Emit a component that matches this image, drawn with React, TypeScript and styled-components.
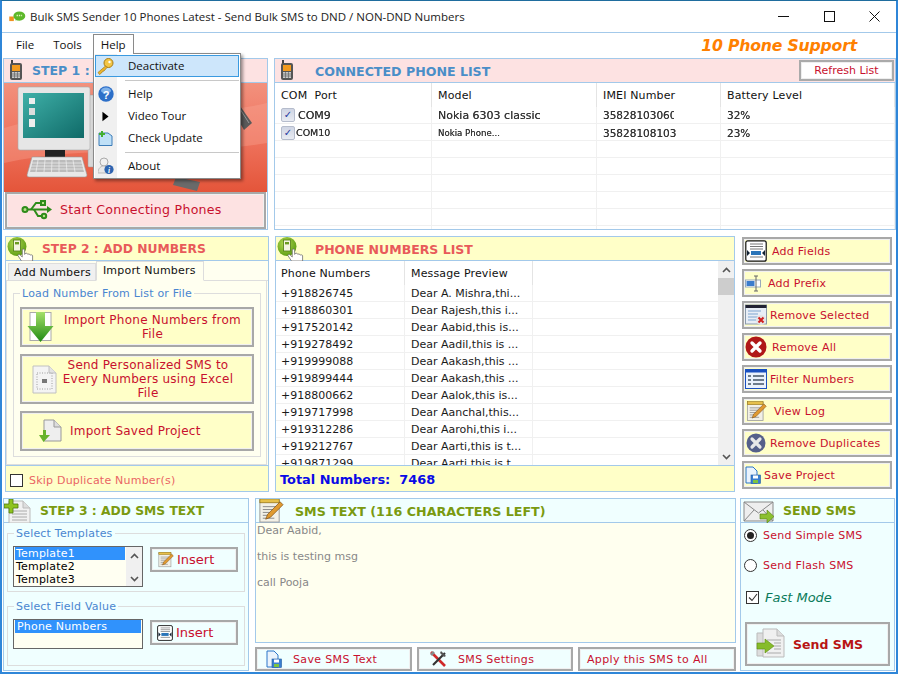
import React from "react";
import styled, { createGlobalStyle } from "styled-components";

const Global = createGlobalStyle`
  html, body { margin: 0; padding: 0; background: #fff; }
  * { box-sizing: border-box; }
  #root { width: 898px; height: 674px; overflow: hidden; }
`;

const VERDANA = `"DejaVu Sans", Verdana, sans-serif`;
const SEGOE = `"Open Sans", "Noto Sans", sans-serif`;
const LINE = "#a3c9ea";
const RED = "#c8102e";

const Win = styled.div`
  position: relative;
  width: 898px;
  height: 674px;
  overflow: hidden;
  background: #fff;
  border-style: solid;
  border-color: #2f86d8;
  border-width: 1px 2px 2px 2px;
  border-top-color: #1f6d9e;
  font-family: ${VERDANA};
  font-size: 11px;
`;
const TitleBar = styled.div`
  height: 32px;
  display: flex;
  align-items: center;
  padding-left: 7px;
  border-bottom: 1px solid ${LINE};
`;
const TitleText = styled.span`
  font-family: ${SEGOE};
  font-size: 11.5px;
  color: #222;
  margin-left: 4px;
  flex: 1;
  white-space: nowrap;
`;
const WinBtns = styled.div`
  display: flex;
  align-items: center;
  gap: 34.5px;
  padding-right: 16px;
`;
const MenuBar = styled.div`
  height: 25px;
  display: flex;
  align-items: flex-start;
  padding: 1px 0 0 6px;
  position: relative;
`;
const MenuItem = styled.div<{ $open?: boolean }>`
  height: 20px;
  padding: 0 7px;
  display: flex;
  align-items: center;
  font-family: ${SEGOE};
  font-size: 11.5px;
  color: #111;
  margin-right: 3px;
  border: 1px solid ${(p) => (p.$open ? "#8a8a8a" : "transparent")};
  border-bottom: none;
  background: #fff;
  z-index: 3;
  position: relative;
`;
const Support = styled.div`
  margin-left: auto;
  margin-right: 39px;
  align-self: center;
  margin-top: -2px;
  font: italic bold 15.7px ${VERDANA};
  color: #ff8000;
  letter-spacing: -0.2px;
`;
const Row = styled.div<{ $gap: number; $left: number; $top: number; $h: number }>`
  display: flex;
  gap: ${(p) => p.$gap}px;
  margin: ${(p) => p.$top}px 0 0 ${(p) => p.$left}px;
  height: ${(p) => p.$h}px;
`;
const Panel = styled.div<{ $w: number; $bg?: string; $nudge?: number; $grow?: boolean }>`
  width: ${(p) => p.$w}px;
  flex: ${(p) => (p.$grow ? 1 : "none")};
  min-height: 0;
  margin-left: ${(p) => p.$nudge ?? 0}px;
  display: flex;
  flex-direction: column;
  border: 1px solid ${LINE};
  background: ${(p) => p.$bg || "#fff"};
  overflow: hidden;
`;
const Head = styled.div<{ $bg: string; $pad?: number; $gap?: number }>`
  height: 24px;
  flex: none;
  display: flex;
  align-items: center;
  background: ${(p) => p.$bg};
  border-bottom: 1px solid ${LINE};
  padding-left: ${(p) => p.$pad ?? 2}px;
  gap: ${(p) => p.$gap ?? 6}px;
`;
const HeadText = styled.span<{ $c: string; $s?: number; $dy?: number }>`
  font-weight: bold;
  font-size: ${(p) => p.$s ?? 12.5}px;
  color: ${(p) => p.$c};
  white-space: nowrap;
  padding-top: ${(p) => p.$dy ?? 0}px;
`;
const Refresh = styled.div`
  margin-left: auto;
  margin-right: 1px;
  width: 95px;
  height: 21px;
  border: 2px solid #aaa;
  box-shadow: inset 0 0 0 1px #eee;
  background: #fff;
  color: ${RED};
  display: flex;
  align-items: center;
  justify-content: center;
  font-size: 11px;
`;
const Illustration = styled.div`
  height: 109px;
  flex: none;
  overflow: hidden;
`;
const BigBtn = styled.div<{ $bg?: string; $h?: number; $w?: number; $pad?: number; $gap?: number; $size?: number }>`
  height: ${(p) => p.$h ?? 28}px;
  width: ${(p) => (p.$w ? `${p.$w}px` : "auto")};
  flex: none;
  display: flex;
  align-items: center;
  gap: ${(p) => p.$gap ?? 4}px;
  padding-left: ${(p) => p.$pad ?? 2}px;
  background: ${(p) => p.$bg || "#ffffc8"};
  border: 2px solid #a8a8a8;
  box-shadow: inset 0 0 0 1px #f0f0f0;
  color: ${RED};
  font-size: ${(p) => p.$size ?? 11}px;
  letter-spacing: 0.25px;
  white-space: nowrap;
`;
const ConnectBtn = styled(BigBtn)`
  margin: 0 1px;
  padding-bottom: 2px;
  background: #fde2e2;
  font-size: 12.6px;
`;
const Table = styled.div`
  flex: 1;
  position: relative;
  overflow: hidden;
  display: flex;
  min-height: 0;
`;
const TableBody = styled.div`
  flex: 1;
  min-width: 0;
  overflow: hidden;
`;
const HeadRow = styled.div<{ $cols: string }>`
  display: grid;
  grid-template-columns: ${(p) => p.$cols};
  height: 24px;
`;
const HeadCell = styled.div<{ $pad?: number }>`
  display: flex;
  align-items: center;
  padding: 1px 5px 0 ${(p) => p.$pad ?? 6}px;
  font-size: 11px;
  letter-spacing: 0.15px;
  color: #111;
  border-right: 1px solid #e4e4e4;
  white-space: pre;
`;
const DataRow = styled.div<{ $cols: string }>`
  display: grid;
  grid-template-columns: ${(p) => p.$cols};
  height: 17px;
  border-bottom: 1px solid #f0f0f0;
  flex: none;
`;
const Cell = styled.div<{ $pad?: number; $pt?: number }>`
  display: flex;
  align-items: center;
  gap: 3px;
  padding-left: ${(p) => p.$pad ?? 6}px;
  padding-top: ${(p) => p.$pt ?? 0}px;
  border-right: 1px solid #f0f0f0;
  font-size: 11px;
  color: #1a1a1a;
  white-space: nowrap;
  overflow: hidden;
`;
const Blurred = styled.span<{ $s?: number; $clip?: number; $shift?: number }>`
  display: inline-block;
  filter: blur(0.6px);
  color: #333;
  text-shadow: 0 0 0.6px #444;
  font-size: ${(p) => p.$s ?? 11}px;
  margin-left: ${(p) => p.$shift ?? 0}px;
  width: ${(p) => (p.$clip ? `${p.$clip}px` : "auto")};
  overflow: hidden;
`;
const Check = styled.span`
  width: 14px;
  height: 14px;
  flex: none;
  border-radius: 2px;
  background: linear-gradient(#cfd5e4, #e8ebf2);
  border: 1px solid #b5bccc;
  color: #2438a0;
  font-size: 10px;
  line-height: 12px;
  text-align: center;
  font-weight: bold;
`;
const Tabs = styled.div`
  display: flex;
  height: 20px;
  padding-left: 2px;
  background: #fffff0;
  flex: none;
  align-items: flex-end;
  border-bottom: 1px solid #ddd;
`;
const Tab = styled.div<{ $on?: boolean }>`
  height: ${(p) => (p.$on ? 20 : 17)}px;
  padding: 0 ${(p) => (p.$on ? 7 : 4)}px ${(p) => (p.$on ? 2 : 0)}px ${(p) => (p.$on ? 6 : 5)}px;
  display: flex;
  align-items: center;
  font-size: 11px;
  letter-spacing: 0.2px;
  color: #111;
  background: ${(p) => (p.$on ? "#fffff0" : "#f0f0f0")};
  border: 1px solid #ddd;
  border-bottom: ${(p) => (p.$on ? "1px solid #fffff0" : "none")};
  margin-bottom: ${(p) => (p.$on ? -1 : 0)}px;
  position: relative;
`;
const TabBody = styled.div`
  flex: 1;
  margin-right: 1px;
  padding: 6px 5px 7px 6px;
  border: 1px solid #ddd;
  border-top: none;
  background: #fffff0;
  display: flex;
  min-height: 0;
`;
const Field = styled.fieldset<{ $gap?: number; $h?: number; $px?: number; $pt?: number }>`
  margin: 0;
  padding: ${(p) => p.$pt ?? 6}px ${(p) => p.$px ?? 6}px 0;
  border: 1px solid #ddd;
  flex: ${(p) => (p.$h ? "none" : 1)};
  height: ${(p) => (p.$h ? `${p.$h}px` : "auto")};
  min-width: 0;
  display: flex;
  flex-direction: column;
  gap: ${(p) => p.$gap ?? 8}px;
`;
const Legend = styled.legend<{ $ml?: number }>`
  color: #4a86d0;
  font-size: 11px;
  letter-spacing: 0.2px;
  padding: 0 2px;
  margin-left: ${(p) => p.$ml ?? 0}px;
  line-height: 13px;
`;
const ImportBtn = styled(BigBtn)<{ $rp?: number }>`
  white-space: normal;
  font-size: 12px;
  line-height: 14px;
  text-align: center;
  padding-right: ${(p) => p.$rp ?? 0}px;
`;
const BtnLabel = styled.span<{ $left?: boolean }>`
  flex: ${(p) => (p.$left ? "none" : 1)};
`;
const Footer = styled.div`
  height: 26px;
  flex: none;
  display: flex;
  align-items: center;
  background: #ffffc8;
  border-top: 1px solid ${LINE};
  padding: 3px 0 0 4px;
  gap: 6px;
  font-size: 11px;
`;
const Box = styled.span`
  width: 13px;
  height: 13px;
  flex: none;
  border: 1px solid #333;
  background: #fff;
  display: inline-flex;
  align-items: center;
  justify-content: center;
`;
const Skip = styled.span`
  color: #ea6464;
  letter-spacing: 0.22px;
  padding-top: 1px;
`;
const Total = styled.span`
  color: #0a0ae6;
  font-weight: bold;
  font-size: 12.9px;
  white-space: pre;
  margin-top: -2px;
`;
const Scroll = styled.div`
  width: 16px;
  flex: none;
  background: #f0f0f0;
  display: flex;
  flex-direction: column;
  align-items: center;
`;
const ScrollArrow = styled.div`
  height: 17px;
  flex: none;
  display: flex;
  align-items: center;
  justify-content: center;
  width: 100%;
`;
const Thumb = styled.div`
  width: 100%;
  height: 17px;
  background: #cdcdcd;
  flex: none;
`;
const ScrollGap = styled.div`
  flex: 1;
`;
const SideCol = styled.div`
  width: 150px;
  flex: none;
  margin-left: 1px;
  display: flex;
  flex-direction: column;
  gap: 4px;
  padding-top: 1px;
`;
const Fields = styled.div`
  flex: 1;
  padding: 4px 3px 3px 3px;
  display: flex;
  flex-direction: column;
  gap: 8px;
  min-height: 0;
`;
const SelectRow = styled.div`
  display: flex;
  gap: 7px;
  align-items: flex-start;
`;
const ListBox = styled.div<{ $h: number }>`
  width: 130px;
  height: ${(p) => p.$h}px;
  border: 1px solid #666;
  background: #fffff2;
  display: flex;
  flex: none;
  overflow: hidden;
`;
const ListItems = styled.div`
  flex: 1;
  padding: 0 1px;
  font-size: 11px;
  letter-spacing: 0.2px;
  line-height: 13px;
  color: #000;
`;
const ListItem = styled.div<{ $on?: boolean; $pad?: number }>`
  background: ${(p) => (p.$on ? "#3092fc" : "transparent")};
  color: ${(p) => (p.$on ? "#fff" : "#000")};
  padding-left: ${(p) => p.$pad ?? 1}px;
`;
const Mini = styled.div`
  width: 16px;
  background: #f0f0f0;
  display: flex;
  flex-direction: column;
  justify-content: space-between;
  align-items: center;
  padding: 6px 0 4px;
`;
const InsertBtn = styled(BigBtn)`
  margin-top: 1px;
  width: 88px;
  height: 25px;
  background: #f0ffff;
  font-size: 13px;
  letter-spacing: 0;
  padding-left: 5px;
  gap: 3px;
`;
const Mid = styled.div`
  width: 481px;
  flex: none;
  display: flex;
  flex-direction: column;
  gap: 4px;
`;
const SmsArea = styled.div`
  flex: 1;
  background: #ffffef;
  padding: 1px 1px 0;
  color: #888;
  font-size: 11px;
  line-height: 13px;
`;
const BtnRow = styled.div`
  display: flex;
  gap: 5px;
  height: 24px;
  flex: none;
`;
const BottomBtn = styled(BigBtn)<{ $grow: number }>`
  width: ${(p) => p.$grow}px;
  height: 24px;
  background: #f0ffff;
  letter-spacing: 0.35px;
`;
const SendBody = styled.div`
  flex: 1;
  display: flex;
  flex-direction: column;
  padding: 3px;
`;
const Radio = styled.div<{ $mb: number }>`
  display: flex;
  align-items: center;
  gap: 6px;
  height: 18px;
  margin-bottom: ${(p) => p.$mb}px;
  color: ${RED};
  font-size: 11px;
  letter-spacing: 0.25px;
`;
const RadioDot = styled.span<{ $on?: boolean }>`
  width: 13px;
  height: 13px;
  border-radius: 50%;
  border: 1px solid #333;
  background: #fff;
  display: inline-flex;
  align-items: center;
  justify-content: center;
  flex: none;
  &::after {
    content: "";
    display: ${(p) => (p.$on ? "block" : "none")};
    width: 7px;
    height: 7px;
    border-radius: 50%;
    background: #222;
  }
`;
const Fast = styled.div`
  display: flex;
  align-items: center;
  gap: 6px;
  height: 18px;
  padding-left: 2px;
  color: #0a7a5a;
  font-style: italic;
  font-size: 13px;
  margin-bottom: 16px;
`;
const SendBtn = styled(BigBtn)`
  height: 44px;
  width: 145px;
  font-weight: bold;
  font-size: 12.5px;
  letter-spacing: 0;
  background: #f0ffff;
  gap: 8px;
  padding-left: 8px;
  margin-left: 1px;
  color: #b81414;
`;
const Dropdown = styled.div`
  position: absolute;
  left: 91px;
  top: 52px;
  width: 148px;
  height: 126px;
  background: #fff;
  border: 1px solid #8a8a8a;
  box-shadow: 2px 2px 3px rgba(0, 0, 0, 0.4);
  z-index: 2;
  padding: 1px;
  font-family: ${SEGOE};
  font-size: 11.5px;
  color: #111;
  background-image: linear-gradient(90deg, transparent 1px, #f0f0f0 1px, #f0f0f0 23px, transparent 23px);
`;
const DropItem = styled.div<{ $hi?: boolean }>`
  height: 22px;
  display: flex;
  align-items: center;
  padding-bottom: 2px;
  border: 1px solid ${(p) => (p.$hi ? "#3a9ae0" : "transparent")};
  background: ${(p) => (p.$hi ? "#cde6fb" : "transparent")};
`;
const DropIcon = styled.span`
  width: 32px;
  flex: none;
  display: flex;
  justify-content: center;
  padding: 2px 13px 0 0;
`;
const DropSep = styled.div`
  height: 1px;
  background: #c8c8c8;
  margin: 3px 0 2px 30px;
`;

/* ------------ icons ------------- */
const PhoneIcon = () => (
  <svg width="14" height="21" viewBox="0 0 14 21">
    <rect x="2" y="0" width="2" height="4" fill="#444" />
    <rect x="1" y="3" width="12" height="17" rx="2" fill="#555" />
    <rect x="3" y="5" width="8" height="6" fill="#f39a1e" />
    <rect x="3" y="12" width="8" height="6" fill="#c9c9c9" />
    <path d="M3 14h8M3 16h8M5.5 12v6M8.5 12v6" stroke="#666" strokeWidth="0.7" />
  </svg>
);
const HandIcon = () => (
  <svg width="28" height="24" viewBox="0 0 28 24">
    <defs>
      <radialGradient id="hg" cx="0.4" cy="0.35" r="0.7">
        <stop offset="0" stopColor="#b4da52" />
        <stop offset="1" stopColor="#5a9a10" />
      </radialGradient>
    </defs>
    <circle cx="10" cy="9.5" r="9.5" fill="url(#hg)" />
    <rect x="6.5" y="3" width="7" height="11" fill="#f4f4e0" stroke="#4f7a12" strokeWidth="0.8" />
    <rect x="8" y="5" width="4" height="2.4" fill="#6b9a20" />
    <path transform="translate(-5 0) scale(1.5 1)" d="M13 24l-2.4-5.4c-.4-1 1-1.6 1.5-.6L13.500 20v-7c0-1.2 1.6-1.2 1.6 0v4.4l.4-.8c.6-.7 1.5-.3 1.5.4l.2.4c.4-.7 1.4-.4 1.4.4l.2.3c.5-.5 1.5-.3 1.6.6V24z" fill="#fff" stroke="#666" strokeWidth="0.6" />
  </svg>
);
const PlusDocIcon = () => (
  <svg width="28" height="24" viewBox="0 0 28 24">
    <path d="M5 2h14l7 7v15H5z" fill="#f1f1f1" stroke="#bbb" />
    <path d="M19 2v7h7" fill="#ddd" stroke="#bbb" />
    <path d="M8 12h15M8 15h15M8 18h15M8 21h15" stroke="#aaa" />
    <path d="M5 0h4v5h5v4H9v5H5V9H0V5h5z" fill="#8fc31f" stroke="#4f7a10" strokeWidth="0.8" />
  </svg>
);
const NoteIcon = ({ s = 28 }: { s?: number }) => (
  <svg width={s} height={s} viewBox="0 0 28 28">
    <rect x="3" y="3" width="20" height="23" fill="#f2f0e6" stroke="#999" />
    <rect x="3" y="2" width="20" height="4" fill="#e6c04a" stroke="#8a6a10" strokeWidth="0.7" />
    <path d="M6 10h14M6 13h12M6 16h9M6 19h8M6 22h12" stroke="#888" />
    <path d="M24 5l3 3-13 13-5 2 2-5z" fill="#e09a30" stroke="#7a4a10" strokeWidth="0.7" />
  </svg>
);
const EnvelopeIcon = () => (
  <svg width="32" height="24" viewBox="0 0 32 24">
    <path d="M1 3h29v19H1z" fill="#eee" stroke="#888" />
    <path d="M1 3l14.5 11L30 3M1 22l10-11M30 22L20 11" fill="none" stroke="#888" />
    <path d="M17 15h7v-4l7 6.5-7 6.5v-4h-7z" fill="#8cc030" stroke="#557d10" strokeWidth="0.6" />
  </svg>
);
const UsbIcon = () => (
  <svg width="32" height="21" viewBox="0 0 32 21">
    <g fill="none" stroke="#2f8c1a" strokeWidth="2">
      <path d="M6 10.5h21" />
      <path d="M10 10.5L15 4h5M13 10.5l4 6.5h4" />
      <circle cx="4" cy="10.5" r="2.5" fill="#b9e08a" />
      <rect x="20" y="2" width="4" height="4" fill="#b9e08a" />
      <circle cx="23" cy="17" r="2.2" fill="#b9e08a" />
    </g>
    <path d="M26 7l5 3.5-5 3.5z" fill="#2f8c1a" />
  </svg>
);
const DownArrowIcon = () => (
  <svg width="27" height="30" viewBox="0 0 27 30">
    <defs>
      <linearGradient id="ag" x1="0" y1="0" x2="0" y2="1">
        <stop offset="0" stopColor="#a6e06a" />
        <stop offset="1" stopColor="#1f8a12" />
      </linearGradient>
    </defs>
    <rect x="3" y="0.5" width="21" height="28" fill="#fff" stroke="#aaa" />
    <path d="M9 0h9v14h8.5L13.5 30 .5 14H9z" fill="url(#ag)" />
  </svg>
);
const ExcelIcon = () => (
  <svg width="25" height="29" viewBox="0 0 25 29">
    <path d="M1 1h16l7 7v20H1z" fill="#f4f4f4" stroke="#c0c0c0" />
    <path d="M17 1v7h7" fill="#e4e4e4" stroke="#c0c0c0" />
    <rect x="5" y="8" width="15" height="16" fill="none" stroke="#bbb" strokeDasharray="1 1.5" strokeWidth="1.5" />
    <rect x="10" y="14" width="5" height="4" fill="#777" />
  </svg>
);
const ImportDocIcon = () => (
  <svg width="23" height="24" viewBox="0 0 23 24">
    <path d="M5 1h10l7 7v14H5z" fill="#eee" stroke="#999" />
    <path d="M15 1v7h7" fill="#ddd" stroke="#999" />
    <path d="M7 11v5h4l-6.5 7L0 16h4v-5z" fill="#66b32a" />
  </svg>
);
const FieldsIcon = ({ s = 22 }: { s?: number }) => (
  <svg width={s} height={s} viewBox="0 0 22 22">
    <rect x="0.8" y="0.8" width="20.4" height="20.4" rx="2" fill="#fff" stroke="#111" strokeWidth="1.2" />
    <path d="M5 4h13M5 6.5h13M5 9h13M5 17h13" stroke="#777" />
    <rect x="6" y="11" width="10" height="4" fill="#2a74b8" />
    <path d="M2 10v6l3-3zM20 10v6l-3-3z" fill="#123" />
  </svg>
);
const PrefixIcon = () => (
  <svg width="17" height="17" viewBox="0 0 17 17">
    <rect x="0.5" y="5" width="15" height="7" fill="#fff" stroke="#9ab" />
    <rect x="1.5" y="6" width="8" height="5" fill="#3c7ccc" />
    <path d="M11 1v15M9 1h4M9 16h4" stroke="#666" />
  </svg>
);
const WindowXIcon = () => (
  <svg width="22" height="22" viewBox="0 0 22 22">
    <rect x="0.5" y="1" width="21" height="19" fill="#e8eef6" stroke="#8a9aaa" />
    <rect x="0.5" y="1" width="21" height="3" fill="#223" />
    <path d="M3 7h13M3 10h10M3 13h10M3 16h8" stroke="#7fa5d0" />
    <circle cx="16" cy="16" r="5" fill="#e4e4e4" />
    <path d="M13.5 13.5l5 5M18.5 13.5l-5 5" stroke="#d02020" strokeWidth="2" />
  </svg>
);
const RedXIcon = () => (
  <svg width="22" height="22" viewBox="0 0 22 22">
    <circle cx="11" cy="11" r="10.5" fill="#b01818" />
    <path d="M7 7l8 8M15 7l-8 8" stroke="#fff" strokeWidth="3.4" strokeLinecap="round" />
  </svg>
);
const ListIcon = () => (
  <svg width="22" height="20" viewBox="0 0 22 20">
    <rect x="0.5" y="0.5" width="21" height="19" fill="#eaf2fc" stroke="#1a50c0" />
    <rect x="0.5" y="0.5" width="21" height="3" fill="#1a50c0" />
    <path d="M3 7h3M3 11h3M3 15h3M8 7h11M8 11h11M8 15h11" stroke="#456" strokeWidth="1.4" />
  </svg>
);
const GreyXIcon = () => (
  <svg width="20" height="20" viewBox="0 0 20 20">
    <circle cx="10" cy="10" r="9.5" fill="#55608a" />
    <path d="M6 6l8 8M14 6l-8 8" stroke="#e8e8e8" strokeWidth="3.2" strokeLinecap="round" />
  </svg>
);
const SaveIcon = ({ s = 16 }: { s?: number }) => (
  <svg width={s} height={s + 2} viewBox="0 0 16 18">
    <path d="M1 1h7l4 4v12H1z" fill="#eaf3fc" stroke="#2a74c8" />
    <rect x="6" y="9" width="9.5" height="8.5" fill="#3a7ed0" stroke="#1f5aa0" strokeWidth="0.6" />
    <rect x="8" y="9.5" width="5" height="3" fill="#fff" />
    <rect x="8" y="14" width="5" height="3" fill="#7ec440" />
  </svg>
);
const ToolsIcon = () => (
  <svg width="18" height="18" viewBox="0 0 18 18">
    <path d="M2 2l14 14" stroke="#d02828" strokeWidth="2.6" />
    <path d="M16 3L4 15" stroke="#333" strokeWidth="2.2" />
    <path d="M12 1l5 5-2 1-4-4z" fill="#555" />
    <path d="M1 4l3-3 2 2-3 3z" fill="#888" />
  </svg>
);
const SendDocIcon = () => (
  <svg width="30" height="32" viewBox="0 0 30 32">
    <path d="M2 5h14l5 5v18H2z" fill="#ddd" stroke="#bbb" />
    <path d="M8 1h14l7 7v21H8z" fill="#f0f0f0" stroke="#bbb" />
    <path d="M22 1v7h7" fill="#ddd" stroke="#bbb" />
    <path d="M12 12h14M19 15h7M19 18h7M19 21h7M12 25h14" stroke="#aaa" />
    <path d="M2 15h8v-4l9 7-9 7v-4H2z" fill="#86bc2a" stroke="#5c8a10" strokeWidth="0.6" />
  </svg>
);
const KeyIcon = () => (
  <svg width="17" height="17" viewBox="0 0 17 17">
    <circle cx="11.5" cy="5" r="4.5" fill="#f3c646" stroke="#a87a14" />
    <circle cx="12.5" cy="4" r="1.2" fill="#fff" />
    <path d="M8.5 8L1 14.5l1.5 2 2-1.5 1-1.5 1.5-.5 3-3.5z" fill="#eab52e" stroke="#a87a14" strokeWidth="0.7" />
  </svg>
);
const HelpIcon = () => (
  <svg width="16" height="16" viewBox="0 0 16 16">
    <circle cx="8" cy="8" r="7.7" fill="#2c6fc8" />
    <ellipse cx="8" cy="4.5" rx="5" ry="3" fill="#7fb2ea" />
    <text x="8" y="12.5" textAnchor="middle" fontSize="11" fontWeight="bold" fill="#fff" fontFamily="Liberation Sans, sans-serif">?</text>
  </svg>
);
const PlayIcon = () => (
  <svg width="7" height="11" viewBox="0 0 8 11">
    <path d="M0.5 0l7 5.5-7 5.500z" fill="#000" />
  </svg>
);
const UpdateIcon = () => (
  <svg width="15" height="15" viewBox="0 0 15 15">
    <path d="M1 2h9l4 3v9.5H1z" fill="#bfe0f7" stroke="#3c7cb8" />
    <path d="M3 0v2H1v2h2v2h2V4h2V2H5V0z" fill="#44b030" />
  </svg>
);
const AboutIcon = () => (
  <svg width="16" height="18" viewBox="0 0 16 18">
    <circle cx="6" cy="5" r="4" fill="#f0f0f0" stroke="#aaa" />
    <path d="M0 16c0-5 3-7 6-7s6 2 6 7z" fill="#e8e8e8" stroke="#bbb" />
    <circle cx="11" cy="12.5" r="4.6" fill="#2d64b0" />
    <text x="11" y="15.5" textAnchor="middle" fontSize="7.5" fontStyle="italic" fontWeight="bold" fill="#fff" fontFamily="Liberation Serif, serif">i</text>
  </svg>
);
const AppIcon = () => (
  <svg width="17" height="11" viewBox="0 0 18 12">
    <rect x="0" y="6" width="5" height="5" fill="#f09020" />
    <ellipse cx="11" cy="5.5" rx="6.5" ry="5" fill="#5cb82a" />
    <path d="M6 10l3-2 1 2z" fill="#5cb82a" />
    <path d="M8 5h6" stroke="#e4f4c0" strokeWidth="1.6" strokeDasharray="1.5 1" />
  </svg>
);
const Caret = ({ up }: { up?: boolean }) => (
  <svg width="9" height="6" viewBox="0 0 9 6">
    <path d={up ? "M1 5l3.5-3.5L8 5" : "M1 1l3.5 3.5L8 1"} fill="none" stroke="#555" strokeWidth="1.6" />
  </svg>
);
const Scene = () => (
  <svg width="263" height="109" viewBox="0 0 263 109">
    <defs>
      <linearGradient id="bg" x1="0" y1="0" x2="0" y2="1">
        <stop offset="0" stopColor="#f2917d" />
        <stop offset="0.45" stopColor="#f07762" />
        <stop offset="1" stopColor="#e4553a" />
      </linearGradient>
      <linearGradient id="scr" x1="0" y1="0" x2="1" y2="1">
        <stop offset="0" stopColor="#3fb0a8" />
        <stop offset="1" stopColor="#0f6a68" />
      </linearGradient>
    </defs>
    <rect width="263" height="109" fill="url(#bg)" />
    <path d="M0 45C80 20 180 40 263 20V60C170 75 90 60 0 80z" fill="#f8a898" opacity="0.35" />
    <rect x="84" y="12" width="26" height="72" rx="1" fill="#d8d8d8" stroke="#999" strokeWidth="0.5" />
    <rect x="14" y="4" width="72" height="63" rx="2" fill="#e6e6e6" stroke="#aaa" strokeWidth="0.6" />
    <rect x="19" y="10" width="61" height="45" fill="url(#scr)" />
    <rect x="25" y="15" width="6" height="6" fill="#eee" />
    <rect x="25" y="25" width="6" height="7" fill="#ddd" />
    <rect x="25" y="36" width="6" height="8" fill="#eee" />
    <rect x="41" y="67" width="20" height="7" fill="#222" />
    <path d="M28 74h50l5 18a2 2 0 0 1-2 2H25a2 2 0 0 1-2-2z" fill="#e8e8e8" stroke="#999" strokeWidth="0.6" />
    <path d="M29 77h48l3 12H26z" fill="#bbb" />
    <path d="M28 80h50M27 83h52M27 86h53M34 77l-2 12M41 77l-1 12M48 77l-.5 12M55 77v12M62 77l1 12M69 77l2 12" stroke="#f2f2f2" strokeWidth="0.7" />
    <path d="M172 94l24 5-3 9-24-6z" fill="#6a6a6a" />
    <path d="M234 20l14 20-8 7-8-14z" fill="#5a5a5a" />
    <path d="M236 26l9 14" stroke="#999" />
  </svg>
);

const phoneCols = "129px 128px 1fr";
const comCols = "157px 165px 124px 1fr";
const rows: [string, string][] = [
  ["+918826745", "Dear A. Mishra,thi..."],
  ["+918860301", "Dear Rajesh,this i..."],
  ["+917520142", "Dear Aabid,this is..."],
  ["+919278492", "Dear Aadil,this is ..."],
  ["+919999088", "Dear Aakash,this ..."],
  ["+919899444", "Dear Aakash,this ..."],
  ["+918800662", "Dear Aalok,this is..."],
  ["+919717998", "Dear Aanchal,this..."],
  ["+919312286", "Dear Aarohi,this i..."],
  ["+919212767", "Dear Aarti,this is t..."],
  ["+919871299.....", "Dear Aarti,this is t"],
];
const side: { label: string; icon: React.ReactNode; gap: number; pad: number }[] = [
  { label: "Add Fields", icon: <FieldsIcon />, gap: 5, pad: 1 },
  { label: "Add Prefix", icon: <PrefixIcon />, gap: 6, pad: 1 },
  { label: "Remove Selected", icon: <WindowXIcon />, gap: 3, pad: 1 },
  { label: "Remove All", icon: <RedXIcon />, gap: 5, pad: 1 },
  { label: "Filter Numbers", icon: <ListIcon />, gap: 3, pad: 1 },
  { label: "View Log", icon: <NoteIcon s={22} />, gap: 7, pad: 1 },
  { label: "Remove Duplicates", icon: <GreyXIcon />, gap: 4, pad: 2 },
  { label: "Save Project", icon: <SaveIcon />, gap: 3, pad: 1 },
];

export default function App() {
  return (
    <>
      <Global />
      <Win>
        <TitleBar>
          <AppIcon />
          <TitleText>Bulk SMS Sender 10 Phones Latest - Send Bulk SMS to DND / NON-DND Numbers</TitleText>
          <WinBtns>
            <svg width="11" height="11" viewBox="0 0 11 11"><path d="M0 5.5h11" stroke="#111" /></svg>
            <svg width="11" height="11" viewBox="0 0 11 11"><rect x="0.5" y="0.5" width="10" height="10" fill="none" stroke="#111" /></svg>
            <svg width="11" height="11" viewBox="0 0 11 11"><path d="M0.5 0.5l10 10M10.5 0.5l-10 10" stroke="#111" /></svg>
          </WinBtns>
        </TitleBar>
        <MenuBar>
          <MenuItem>File</MenuItem>
          <MenuItem>Tools</MenuItem>
          <MenuItem $open>Help</MenuItem>
          <Support>10 Phone Support</Support>
        </MenuBar>
        <Dropdown>
          <DropItem $hi>
            <DropIcon><KeyIcon /></DropIcon>Deactivate
          </DropItem>
          <DropSep />
          <DropItem><DropIcon><HelpIcon /></DropIcon>Help</DropItem>
          <DropItem><DropIcon><PlayIcon /></DropIcon>Video Tour</DropItem>
          <DropItem><DropIcon><UpdateIcon /></DropIcon>Check Update</DropItem>
          <DropSep />
          <DropItem><DropIcon><AboutIcon /></DropIcon>About</DropItem>
        </Dropdown>

        <Row $gap={6} $left={1} $top={0} $h={172}>
          <Panel $w={265}>
            <Head $bg="#fde2e2" $pad={5} $gap={9}>
              <PhoneIcon />
              <HeadText $c="#4a8ec8">STEP 1 :</HeadText>
            </Head>
            <Illustration><Scene /></Illustration>
            <ConnectBtn $h={37} $pad={14} $gap={7}>
              <UsbIcon />
              Start Connecting Phones
            </ConnectBtn>
          </Panel>
          <Panel $w={622}>
            <Head $bg="#fde2e2" $pad={5} $gap={21}>
              <PhoneIcon />
              <HeadText $c="#4a8ec8" $s={12.6} $dy={1}>CONNECTED PHONE LIST</HeadText>
              <Refresh>Refresh List</Refresh>
            </Head>
            <Table>
              <TableBody>
                <HeadRow $cols={comCols}>
                  <HeadCell>COM  Port</HeadCell>
                  <HeadCell>Model</HeadCell>
                  <HeadCell>IMEI Number</HeadCell>
                  <HeadCell>Battery Level</HeadCell>
                </HeadRow>
                <DataRow $cols={comCols}>
                  <Cell><Check>✓</Check><Blurred>COM9</Blurred></Cell>
                  <Cell><Blurred>Nokia 6303 classic</Blurred></Cell>
                  <Cell><Blurred $s={10.5} $clip={71}>35828103060</Blurred></Cell>
                  <Cell><Blurred $s={10.5}>32%</Blurred></Cell>
                </DataRow>
                <DataRow $cols={comCols}>
                  <Cell $pt={1}><Check>✓</Check><Blurred $s={9.5} $shift={-2}>COM10</Blurred></Cell>
                  <Cell $pt={1}><Blurred $s={8.6}>Nokia Phone...</Blurred></Cell>
                  <Cell $pt={1}><Blurred $s={10.5}>35828108103</Blurred></Cell>
                  <Cell $pt={1}><Blurred $s={10.5}>23%</Blurred></Cell>
                </DataRow>
                {[0, 1, 2, 3, 4, 5].map((i) => (
                  <DataRow key={i} $cols={comCols}>
                    <Cell /><Cell /><Cell /><Cell />
                  </DataRow>
                ))}
              </TableBody>
            </Table>
          </Panel>
        </Row>

        <Row $gap={6} $left={3} $top={6} $h={256}>
          <Panel $w={264} $bg="#fffff0">
            <Head $bg="#ffffc8" $pad={1} $gap={7}>
              <HandIcon />
              <HeadText $c="#e85a5a" $s={12.3}>STEP 2 : ADD NUMBERS</HeadText>
            </Head>
            <Tabs>
              <Tab>Add Numbers</Tab>
              <Tab $on>Import Numbers</Tab>
            </Tabs>
            <TabBody>
              <Field $pt={7} $gap={7}>
                <Legend>Load Number From List or File</Legend>
                <ImportBtn $h={40} $pad={5} $gap={7} $rp={8}>
                  <DownArrowIcon />
                  <BtnLabel>Import Phone Numbers from File</BtnLabel>
                </ImportBtn>
                <ImportBtn $h={50} $pad={10} $gap={1} $rp={14}>
                  <ExcelIcon />
                  <BtnLabel>Send Personalized SMS to<br />Every Numbers using Excel<br />File</BtnLabel>
                </ImportBtn>
                <ImportBtn $h={40} $pad={17} $gap={8}>
                  <ImportDocIcon />
                  <BtnLabel $left>Import Saved Project</BtnLabel>
                </ImportBtn>
              </Field>
            </TabBody>
            <Footer>
              <Box />
              <Skip>Skip Duplicate Number(s)</Skip>
            </Footer>
          </Panel>
          <Panel $w={460}>
            <Head $bg="#ffffc8" $pad={1} $gap={10}>
              <HandIcon />
              <HeadText $c="#e85a5a" $dy={1}>PHONE NUMBERS LIST</HeadText>
            </Head>
            <Table>
              <TableBody>
                <HeadRow $cols={phoneCols}>
                  <HeadCell $pad={5}>Phone Numbers</HeadCell>
                  <HeadCell>Message Preview</HeadCell>
                  <span />
                </HeadRow>
                {rows.map(([n, m]) => (
                  <DataRow key={n} $cols={phoneCols}>
                    <Cell $pad={5} $pt={1}>{n}</Cell>
                    <Cell $pt={1}>{m}</Cell>
                    <span />
                  </DataRow>
                ))}
              </TableBody>
              <Scroll>
                <ScrollArrow><Caret up /></ScrollArrow>
                <Thumb />
                <ScrollGap />
                <ScrollArrow><Caret /></ScrollArrow>
              </Scroll>
            </Table>
            <Footer>
              <Total>Total Numbers:  7468</Total>
            </Footer>
          </Panel>
          <SideCol>
            {side.map((b) => (
              <BigBtn key={b.label} $gap={b.gap} $pad={b.pad}>
                {b.icon}
                {b.label}
              </BigBtn>
            ))}
          </SideCol>
        </Row>

        <Row $gap={6} $left={1} $top={6} $h={173}>
          <Panel $w={246} $bg="#f0ffff">
            <Head $bg="#f0ffff" $pad={0} $gap={8}>
              <PlusDocIcon />
              <HeadText $c="#7a9a10" $s={12.3}>STEP 3 : ADD SMS TEXT</HeadText>
            </Head>
            <Fields>
              <Field $h={65} $px={5}>
                <Legend $ml={1}>Select Templates</Legend>
                <SelectRow>
                  <ListBox $h={41}>
                    <ListItems>
                      <ListItem $on>Template1</ListItem>
                      <ListItem>Template2</ListItem>
                      <ListItem>Template3</ListItem>
                    </ListItems>
                    <Mini><Caret up /><Caret /></Mini>
                  </ListBox>
                  <InsertBtn>
                    <NoteIcon s={17} />Insert
                  </InsertBtn>
                </SelectRow>
              </Field>
              <Field $h={66} $px={5}>
                <Legend $ml={1}>Select Field Value</Legend>
                <SelectRow>
                  <ListBox $h={30}>
                    <ListItems>
                      <ListItem $on $pad={2}>Phone Numbers</ListItem>
                    </ListItems>
                  </ListBox>
                  <InsertBtn>
                    <FieldsIcon s={16} />Insert
                  </InsertBtn>
                </SelectRow>
              </Field>
            </Fields>
          </Panel>
          <Mid>
            <Panel $w={481} $bg="#ffffef" $grow>
              <Head $bg="#f0ffff" $pad={1} $gap={11}>
                <NoteIcon s={27} />
                <HeadText $c="#7a9a10" $s={12.65} $dy={1}>SMS TEXT (116 CHARACTERS LEFT)</HeadText>
              </Head>
              <SmsArea>
                Dear Aabid,
                <br /><br />
                this is testing msg
                <br /><br />
                call Pooja
              </SmsArea>
            </Panel>
            <BtnRow>
              <BottomBtn $grow={157} $pad={9} $gap={11}>
                <SaveIcon />Save SMS Text
              </BottomBtn>
              <BottomBtn $grow={156} $pad={10} $gap={11}>
                <ToolsIcon />SMS Settings
              </BottomBtn>
              <BottomBtn $grow={158} $pad={7}>
                Apply this SMS to All
              </BottomBtn>
            </BtnRow>
          </Mid>
          <Panel $w={155} $bg="#f0ffff" $nudge={-2}>
            <Head $bg="#f0ffff" $pad={2} $gap={8}>
              <EnvelopeIcon />
              <HeadText $c="#7a9a10">SEND SMS</HeadText>
            </Head>
            <SendBody>
              <Radio $mb={12}><RadioDot $on />Send Simple SMS</Radio>
              <Radio $mb={14}><RadioDot />Send Flash SMS</Radio>
              <Fast>
                <Box>
                  <svg width="10" height="9" viewBox="0 0 10 9"><path d="M1 4.5l3 3 5-6.5" fill="none" stroke="#333" strokeWidth="1.1" /></svg>
                </Box>
                Fast Mode
              </Fast>
              <SendBtn>
                <SendDocIcon />Send SMS
              </SendBtn>
            </SendBody>
          </Panel>
        </Row>
      </Win>
    </>
  );
}
